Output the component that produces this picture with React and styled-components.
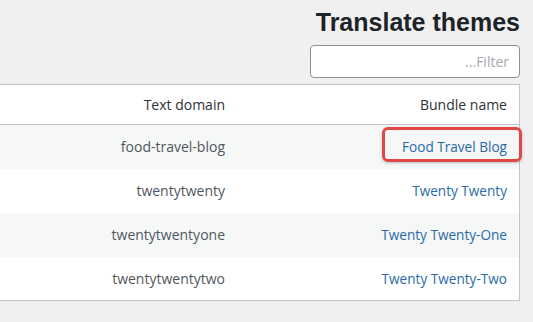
import styled, { createGlobalStyle } from "styled-components";

const GlobalStyle = createGlobalStyle`
    html, body {
        margin: 0;
        background: #f0f0f1;
        overflow: hidden;
    }
    body {
        direction: rtl;
        font-family: "Open Sans", "Liberation Sans", sans-serif;
    }
`

const themes = [
    { domain: "food-travel-blog", name: "Food Travel Blog", marked: true },
    { domain: "twentytwenty", name: "Twenty Twenty" },
    { domain: "twentytwentyone", name: "Twenty Twenty-One" },
    { domain: "twentytwentytwo", name: "Twenty Twenty-Two" },
];

export default function App() {
    return (
        <Page>
            <GlobalStyle />
            <Head>
                <Tittle>Translate themes</Tittle>
                <Filter type="search" placeholder="Filter..." />
            </Head>
            <Table>
                <thead>
                    <tr>
                        <Th $w={258}>Bundle name</Th>
                        <Th>Text domain</Th>
                    </tr>
                </thead>
                <tbody>
                    {themes.map((t) => (
                        <Row key={t.domain}>
                            <Td>
                                <ThemeLink href="#">
                                    {t.name}
                                    {t.marked && <Marker />}
                                </ThemeLink>
                            </Td>
                            <Td $muted>{t.domain}</Td>
                        </Row>
                    ))}
                </tbody>
            </Table>
        </Page>
    );
}

const Page = styled.div`
    width: 520px;
    margin-right: 13px;
    padding-top: 7px;
`

const Head = styled.div`
    display: flex;
    flex-direction: column;
    align-items: flex-start;
    gap: 8px;
    margin-bottom: 6px;
`

const Tittle = styled.h1`
    margin: 0;
    font-family: "Liberation Sans", Arial, sans-serif;
    font-size: 25px;
    font-weight: 700;
    line-height: 30px;
    color: #1d2327;
`

const Filter = styled.input`
    box-sizing: border-box;
    width: 210px;
    height: 33px;
    padding: 0 10px;
    border: 1px solid #8c8f94;
    border-radius: 4px;
    background: #fff;
    font-family: inherit;
    font-size: 14px;
    direction: rtl;

    &::placeholder {
        color: #a7aaad;
    }
`

const Table = styled.table`
    width: 640px;
    border-collapse: collapse;
    table-layout: fixed;
    background: #fff;
    border: 1px solid #c3c4c7;
`

const Th = styled.th`
    ${(p) => p.$w && `width: ${p.$w}px;`}
    height: 39px;
    padding: 0 12px;
    text-align: right;
    font-weight: 400;
    font-size: 14px;
    color: #2c3338;
    border-bottom: 1px solid #c3c4c7;
`

const Row = styled.tr`
    height: 44px;

    &:nth-child(odd) {
        background: #f6f7f7;
    }
`

const Td = styled.td`
    padding: 0 12px;
    text-align: right;
    font-size: 14px;
    color: ${(p) => (p.$muted ? "#50575e" : "#2271b1")};
`

const ThemeLink = styled.a`
    position: relative;
    color: #2a6aa8;
    font-size: 13.6px;
    text-decoration: none;
`

const Marker = styled.span`
    position: absolute;
    top: -10px;
    bottom: -6px;
    right: -15px;
    left: -20px;
    border: 3px solid #e04848;
    border-radius: 6px;
    box-shadow: 0 1px 3px rgba(0, 0, 0, 0.25);
    pointer-events: none;
`
